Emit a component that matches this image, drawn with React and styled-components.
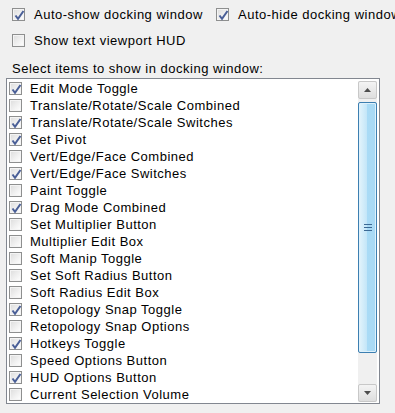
import React from 'react';
import styled, { createGlobalStyle } from 'styled-components';

const GlobalStyle = createGlobalStyle`
  html, body {
    margin: 0;
    padding: 0;
    background: #f0f0f0;
    overflow: hidden;
  }
  body {
    font-family: "Liberation Sans", Arial, sans-serif;
    font-size: 13px;
    letter-spacing: 0.5px;
    color: #000;
  }
`;

const Page = styled.div`
  width: 395px;
  height: 413px;
  box-sizing: border-box;
  padding-top: 7px;
  white-space: nowrap;
  overflow: hidden;
`;

const OptionRow = styled.div`
  display: flex;
  height: 26px;
  padding-left: 12px;
`;

const Option = styled.label`
  flex: none;
  display: flex;
  align-items: flex-start;
  gap: 9px;
  width: ${(p) => p.$width || 'auto'};
  line-height: 16px;
`;

const Box = styled.span`
  flex: none;
  position: relative;
  box-sizing: border-box;
  width: 13px;
  height: 13px;
  margin-top: ${(p) => p.$top || 1}px;
  border: 1px solid #8e8f8f;
  background: linear-gradient(135deg, #dcdcdc 0%, #f2f2f2 60%, #ffffff 100%);
  box-shadow: inset 0 0 0 1px #f4f4f4;
`;

const Tick = styled.svg`
  position: absolute;
  left: 1px;
  top: 1px;
`;

const Caption = styled.div`
  padding-left: 12px;
  margin-top: 2px;
  line-height: 16px;
`;

const ListBox = styled.div`
  display: flex;
  margin: 1px 0 0 6px;
  width: 374px;
  height: 326px;
  box-sizing: border-box;
  border: 1px solid #828790;
  background: #fff;
  overflow: hidden;
`;

const Items = styled.div`
  flex: 1;
  padding: 1px 0 0 2px;
`;

const Item = styled.div`
  display: flex;
  align-items: flex-start;
  height: 17px;
  gap: 8px;
  line-height: 17px;
`;

const Scroll = styled.div`
  display: flex;
  flex-direction: column;
  width: 19px;
  margin: 2px 2px 1px 0;
  background: #f0f0f0;
`;

const Arrow = styled.div`
  flex: none;
  display: flex;
  align-items: center;
  justify-content: center;
  height: 18px;
  box-sizing: border-box;
  border: 1px solid #c8c8c8;
  border-radius: 2px;
  background: linear-gradient(#f4f4f4, #dedede);
`;

const Thumb = styled.div`
  flex: none;
  display: flex;
  align-items: center;
  justify-content: center;
  margin-top: 3px;
  height: 251px;
  box-sizing: border-box;
  border: 1px solid #3c7fb1;
  border-radius: 2px;
  background: linear-gradient(90deg, #e3f4fc 0%, #c4e6f8 45%, #a9dbf6 50%, #a9d9f4 100%);
  box-shadow: inset 0 0 0 1px #dff1fb;
`;

const Track = styled.div`
  flex: 1;
`;

const Check = () => (
  <Tick width="11" height="11" viewBox="0 0 11 11">
    <path d="M1.5 5.5 L4 8.8 L9.5 1" fill="none" stroke="#4a5f97" strokeWidth="2" />
  </Tick>
);

const CheckBox = ({ checked, top }) => <Box $top={top}>{checked && <Check />}</Box>;

const items = [
  ['Edit Mode Toggle', true],
  ['Translate/Rotate/Scale Combined', false],
  ['Translate/Rotate/Scale Switches', true],
  ['Set Pivot', true],
  ['Vert/Edge/Face Combined', false],
  ['Vert/Edge/Face Switches', true],
  ['Paint Toggle', false],
  ['Drag Mode Combined', true],
  ['Set Multiplier Button', false],
  ['Multiplier Edit Box', false],
  ['Soft Manip Toggle', false],
  ['Set Soft Radius Button', false],
  ['Soft Radius Edit Box', false],
  ['Retopology Snap Toggle', true],
  ['Retopology Snap Options', false],
  ['Hotkeys Toggle', true],
  ['Speed Options Button', false],
  ['HUD Options Button', true],
  ['Current Selection Volume', false],
];

const App = () => {
  return (
    <Page>
      <GlobalStyle />
      <OptionRow>
        <Option $width="204px">
          <CheckBox checked />
          Auto-show docking window
        </Option>
        <Option>
          <CheckBox checked />
          Auto-hide docking window
        </Option>
      </OptionRow>
      <OptionRow>
        <Option>
          <CheckBox />
          Show text viewport HUD
        </Option>
      </OptionRow>
      <Caption>Select items to show in docking window:</Caption>
      <ListBox>
        <Items>
          {items.map(([name, on]) => (
            <Item key={name}>
              <CheckBox checked={on} top={2} />
              {name}
            </Item>
          ))}
        </Items>
        <Scroll>
          <Arrow>
            <svg width="7" height="4" viewBox="0 0 7 4">
              <path d="M0 4 L3.5 0 L7 4 Z" fill="#4d4d4d" />
            </svg>
          </Arrow>
          <Thumb>
            <svg width="8" height="7" viewBox="0 0 8 7">
              <path d="M0 0.5 H8 M0 3.5 H8 M0 6.5 H8" stroke="#3c6a95" strokeWidth="1" />
            </svg>
          </Thumb>
          <Track />
          <Arrow>
            <svg width="7" height="4" viewBox="0 0 7 4">
              <path d="M0 0 L3.5 4 L7 0 Z" fill="#4d4d4d" />
            </svg>
          </Arrow>
        </Scroll>
      </ListBox>
    </Page>
  );
};

export default App;
